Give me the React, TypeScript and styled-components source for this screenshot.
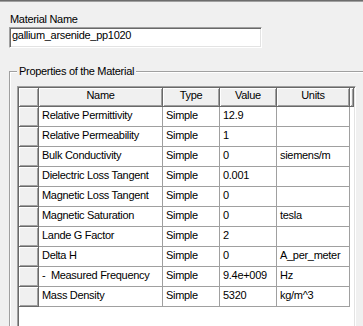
import React from "react";
import styled, { createGlobalStyle } from "styled-components";

const Global = createGlobalStyle`
  html, body {
    margin: 0;
    padding: 0;
    overflow: hidden;
    background: #f0f0f0;
  }
  body {
    font-family: "Liberation Sans", Arial, sans-serif;
    font-size: 11px;
    letter-spacing: -0.3px;
    color: #000;
  }
`;

const Page = styled.div`
  width: 363px;
  height: 326px;
  box-sizing: border-box;
  overflow: hidden;
  border-top: 1px solid #6d6d6d;
  box-shadow: inset 0 1px 0 #a0a0a0;
  padding: 12px 0 0 9px;
`;

const Label = styled.div`
  line-height: 13px;
  padding-left: 1px;
`;

const TextBox = styled.div`
  margin-top: 1px;
  width: 253px;
  height: 21px;
  box-sizing: border-box;
  background: #fff;
  border: 1px solid;
  border-color: #a0a0a0 #fff #fff #a0a0a0;
  box-shadow: inset 1px 1px 0 #696969, inset -1px -1px 0 #e3e3e3;
  padding: 1px 0 0 2px;
  line-height: 13px;
`;

const Group = styled.div`
  position: relative;
  margin-top: 23px;
  width: 420px;
  height: 300px;
  border-top: 1px solid #a0a0a0;
  border-left: 1px solid #a0a0a0;
  box-shadow: inset 1px 1px 0 #fff;
  padding: 14px 0 0 7px;
  box-sizing: border-box;
`;

const GroupTitle = styled.span`
  position: absolute;
  left: 7px;
  top: -7px;
  padding: 0 2px;
  background: #f0f0f0;
  line-height: 13px;
`;

const Grid = styled.div`
  width: 339px;
  height: 280px;
  box-sizing: border-box;
  background: #fff;
  border: 1px solid;
  border-color: #a0a0a0 #fff #fff #a0a0a0;
  box-shadow: inset 1px 1px 0 #696969, inset -1px -1px 0 #e3e3e3;
  padding: 1px;
  display: grid;
  grid-template-columns: 20px 124px 57px 57px 73px 1fr;
  grid-auto-rows: 20px;
  grid-template-rows: 19px;
  align-content: start;
`;

const raised = `
  background: #f0f0f0;
  border-right: 1px solid #696969;
  border-bottom: 1px solid #696969;
  box-shadow: inset 1px 1px 0 #fff, inset -1px -1px 0 #a0a0a0;
  box-sizing: border-box;
`;

const HeadCell = styled.div`
  ${raised}
  text-align: center;
  line-height: 15px;
  white-space: nowrap;
  overflow: hidden;
`;

const RowHead = styled.div`
  ${raised}
`;

const Cell = styled.div`
  box-sizing: border-box;
  border-right: 1px solid #a0a0a0;
  border-bottom: 1px solid #a0a0a0;
  padding-left: 3px;
  line-height: 17px;
  white-space: pre;
  overflow: hidden;
`;

const Filler = styled.div``;

const rows: [string, string, string][] = [
  ["Relative Permittivity", "12.9", ""],
  ["Relative Permeability", "1", ""],
  ["Bulk Conductivity", "0", "siemens/m"],
  ["Dielectric Loss Tangent", "0.001", ""],
  ["Magnetic Loss Tangent", "0", ""],
  ["Magnetic Saturation", "0", "tesla"],
  ["Lande G Factor", "2", ""],
  ["Delta H", "0", "A_per_meter"],
  ["-  Measured Frequency", "9.4e+009", "Hz"],
  ["Mass Density", "5320", "kg/m^3"],
];

export default function App() {
  return (
    <Page>
      <Global />
      <Label>Material Name</Label>
      <TextBox>gallium_arsenide_pp1020</TextBox>
      <Group>
        <GroupTitle>Properties of the Material</GroupTitle>
        <Grid>
          <HeadCell />
          <HeadCell>Name</HeadCell>
          <HeadCell>Type</HeadCell>
          <HeadCell>Value</HeadCell>
          <HeadCell>Units</HeadCell>
          <HeadCell />
          {rows.map(([name, value, units]) => (
            <React.Fragment key={name}>
              <RowHead />
              <Cell>{name}</Cell>
              <Cell>Simple</Cell>
              <Cell>{value}</Cell>
              <Cell>{units}</Cell>
              <Filler />
            </React.Fragment>
          ))}
        </Grid>
      </Group>
    </Page>
  );
}
